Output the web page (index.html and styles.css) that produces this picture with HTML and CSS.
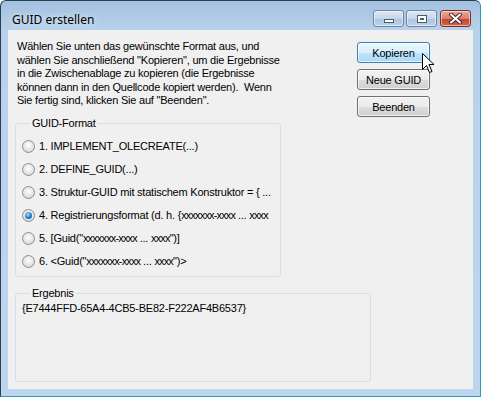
FILE: index.html
```html
<!DOCTYPE html>
<html lang="de">
<head>
    <meta charset="UTF-8">
    <title>GUID erstellen</title>
    <link rel="stylesheet" href="styles.css">
</head>
<body>
    <div class="window">
        <div class="titlebar">
            <span class="title">GUID erstellen</span>
            <div class="caption-buttons">
                <span class="cap-btn"><span class="glyph-min"></span></span>
                <span class="cap-btn"><span class="glyph-max"></span></span>
                <span class="cap-btn close">
                    <svg width="13" height="11" viewBox="0 0 13 11">
                        <path d="M2 1.5 L11 9.5 M11 1.5 L2 9.5" stroke="#4a2a26" stroke-width="4" stroke-linecap="round"/>
                        <path d="M2 1.5 L11 9.5 M11 1.5 L2 9.5" stroke="#fff" stroke-width="2" stroke-linecap="round"/>
                    </svg>
                </span>
            </div>
        </div>
        <div class="client">
            <div class="top">
                <div class="left">
                    <p class="intro">Wählen Sie unten das gewünschte Format aus, und<br>wählen Sie anschließend "Kopieren", um die Ergebnisse<br>in die Zwischenablage zu kopieren (die Ergebnisse<br>können dann in den Quellcode kopiert werden).&nbsp; Wenn<br>Sie fertig sind, klicken Sie auf "Beenden".</p>
                    <fieldset class="group format">
                        <legend>GUID-Format</legend>
                        <div class="radio-row"><span class="radio"></span>1. IMPLEMENT_OLECREATE(...)</div>
                        <div class="radio-row"><span class="radio"></span>2. DEFINE_GUID(...)</div>
                        <div class="radio-row"><span class="radio"></span>3. Struktur-GUID mit statischem Konstruktor = { ...</div>
                        <div class="radio-row"><span class="radio checked"></span>4. Registrierungsformat (d. h. {<span class="xs">xxxxxxx-xxxx</span> ... <span class="xs">xxxx</span></div>
                        <div class="radio-row"><span class="radio"></span>5. [Guid("<span class="xs">xxxxxxx-xxxx</span> ... <span class="xs">xxxx</span>")]</div>
                        <div class="radio-row"><span class="radio"></span>6. &lt;Guid("<span class="xs">xxxxxxx-xxxx</span> ... <span class="xs">xxxx</span>")&gt;</div>
                    </fieldset>
                </div>
                <div class="buttons">
                    <button class="btn hot">Kopieren</button>
                    <button class="btn">Neue GUID</button>
                    <button class="btn">Beenden</button>
                </div>
            </div>
            <fieldset class="group result">
                <legend>Ergebnis</legend>
                <div class="guid">{E7444FFD-65A4-4CB5-BE82-F222AF4B6537}</div>
            </fieldset>
            <svg class="cursor" width="13" height="21" viewBox="0 0 13 21">
                <path d="M0.5 0.5 L0.5 16.5 L4.5 12.5 L7.5 19.5 L10 18.5 L7 11.5 L12 11.5 Z" fill="#fff" stroke="#000" stroke-width="1"/>
            </svg>
        </div>
    </div>
</body>
</html>
```

FILE: styles.css
```css
* {
    box-sizing: border-box;
}
body {
    margin: 0;
    font-family: "Liberation Sans", Arial, sans-serif;
    font-size: 11px;
    letter-spacing: -0.22px;
    color: #000;
}
.window {
    width: 481px;
    height: 397px;
    border: 1px solid #2c3e52;
    border-right-color: #2a9cc4;
    border-bottom-color: #2a9cc4;
    border-radius: 6px 6px 0 0;
    background: linear-gradient(#a3c0df, #b9d2eb 29px, #bdd5ed);
    padding: 0 7px 7px;
    display: flex;
    flex-direction: column;
}
.titlebar {
    height: 29px;
    display: flex;
    align-items: flex-start;
}
.title {
    font-family: "Noto Sans", "Open Sans", sans-serif;
    font-size: 12px;
    letter-spacing: 0;
    margin: 10px 0 0 4px;
    text-shadow: 0 0 6px rgba(255,255,255,0.9);
}
.caption-buttons {
    margin: 9px 2px 0 auto;
    display: flex;
    gap: 2px;
}
.cap-btn {
    width: 31px;
    height: 17px;
    border: 1px solid #6f84a0;
    border-radius: 3px;
    background: linear-gradient(#dce7f3, #c5d7ea 50%, #adc4de 51%, #bcd2ea);
    box-shadow: inset 0 0 0 1px rgba(255,255,255,0.5);
    display: flex;
    align-items: center;
    justify-content: center;
}
.cap-btn.close {
    width: 31px;
    border-color: #76302a;
    background: linear-gradient(#e9a99c, #d9816f 50%, #c4412b 51%, #d3664f);
    margin-left: 1px;
}
.glyph-min {
    width: 10px;
    height: 4px;
    margin-top: 5px;
    background: #fff;
    border: 1px solid #4a5b70;
}
.glyph-max {
    width: 10px;
    height: 8px;
    border: 1px solid #4a5b70;
    background: #fff;
    box-shadow: inset 0 0 0 2px #fff, inset 0 0 0 3px #4a5b70;
}
.client {
    flex: 1;
    background: #f0f0f0;
    position: relative;
}
.top {
    display: flex;
}
.left {
    width: 340px;
    padding-left: 7px;
}
.intro {
    margin: 10px 0 0 2px;
    line-height: 13.6px;
    white-space: nowrap;
}
.group {
    margin: 0;
    min-width: 0;
    border: 1px solid #d5dfe5;
    border-radius: 3px;
    padding: 0;
}
.group legend {
    margin-left: 8px;
    padding: 0 2px;
    line-height: 13px;
}
.format {
    width: 266px;
    margin-top: 9px;
    padding: 5px 0 3px 6px;
}
.radio-row {
    height: 23px;
    display: flex;
    align-items: center;
    white-space: pre;
}
.xs {
    letter-spacing: -0.85px;
}
.radio {
    flex: none;
    width: 13px;
    height: 13px;
    border-radius: 50%;
    border: 1px solid #8c8f91;
    background: radial-gradient(circle at 50% 40%, #ffffff, #e2e2e2 60%, #c6c6c6);
    margin-right: 4px;
    position: relative;
}
.radio.checked::after {
    content: "";
    position: absolute;
    left: 2px;
    top: 2px;
    width: 7px;
    height: 7px;
    border-radius: 50%;
    background: radial-gradient(circle at 40% 35%, #9fd6f8, #2a7cc4 55%, #0c3c78);
}
.buttons {
    margin: 12px 0 0 9px;
    display: flex;
    flex-direction: column;
    gap: 6px;
}
.btn {
    width: 73px;
    height: 21px;
    padding: 0;
    font-family: "Liberation Sans", Arial, sans-serif;
    font-size: 11px;
    letter-spacing: -0.22px;
    color: #000;
    border: 1px solid #707070;
    border-radius: 3px;
    background: linear-gradient(#f2f2f2, #ebebeb 50%, #dddddd 51%, #cfcfcf);
    box-shadow: inset 0 0 0 1px rgba(255,255,255,0.7);
}
.btn.hot {
    border-color: #3c7fb1;
    background: linear-gradient(#eaf6fd, #d9f0fc 50%, #bee6fd 51%, #a7d9f5);
}
.result {
    width: 356px;
    height: 95px;
    margin: 10px 0 0 7px;
    padding: 2px 6px;
}
.guid {
    line-height: 13px;
}
.cursor {
    position: absolute;
    left: 414px;
    top: 23px;
}
```
